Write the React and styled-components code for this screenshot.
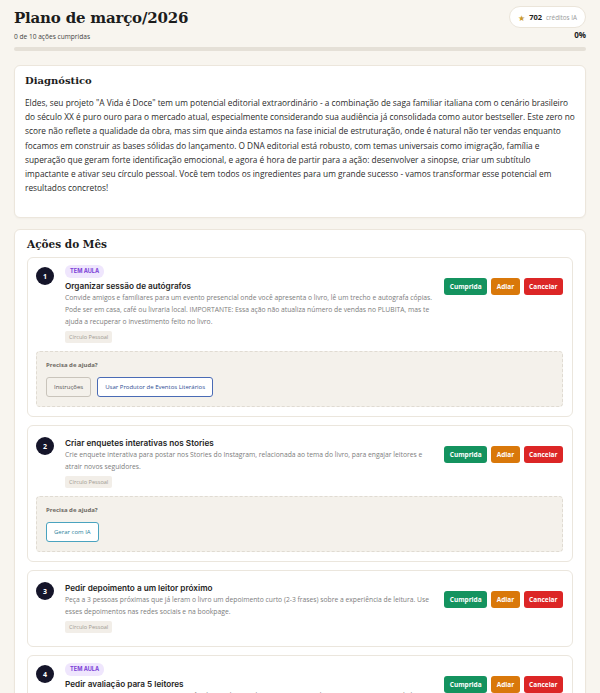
import React from "react";
import styled, { createGlobalStyle } from "styled-components";

const GlobalStyle = createGlobalStyle`
  body {
    margin: 0;
    background: #f8f5ef;
    font-family: "Open Sans", "Liberation Sans", sans-serif;
    color: #2a2a2a;
  }
`;

const Page = styled.div`
  padding: 6px 14px 0;
  width: 600px;
  box-sizing: border-box;
  height: 693px;
  overflow: hidden;
`;

const Header = styled.div`
  display: flex;
  justify-content: space-between;
  align-items: flex-start;
`;

const Title = styled.h1`
  margin: 3px 0 0;
  font-family: "DejaVu Serif", "Liberation Serif", serif;
  font-size: 15px;
  font-weight: 700;
  color: #1c1c1c;
  letter-spacing: -0.2px;
`;

const Sub = styled.div`
  margin-top: 5px;
  font-size: 6.6px;
  color: #444;
`;

const RightCol = styled.div`
  display: flex;
  flex-direction: column;
  align-items: flex-end;
`;

const Pill = styled.div`
  display: flex;
  align-items: center;
  gap: 4px;
  height: 22px;
  box-sizing: border-box;
  padding: 0 8px;
  background: #fff;
  border: 1px solid #ebe5da;
  border-radius: 999px;
  font-size: 6.3px;
  color: #999;

  b {
    font-size: 7.5px;
    color: #222;
  }
`;

const Star = styled.span`
  color: #c99a2e;
  font-size: 8px;
`;

const Percent = styled.div`
  margin-top: 1px;
  font-size: 8px;
  font-weight: 700;
  color: #222;
`;

const Bar = styled.div`
  margin-top: 6px;
  height: 4px;
  border-radius: 2px;
  background: #e5e0d7;
`;

const Card = styled.section`
  margin-top: ${(p) => p.$mt || 11}px;
  background: #fff;
  border: 1px solid #ece6dc;
  border-radius: 6px;
  box-shadow: 0 1px 2px rgba(0, 0, 0, 0.03);
  padding: ${(p) => p.$pad || "8px 10px 22px"};
`;

const CardTitle = styled.h2`
  margin: 0;
  font-family: "DejaVu Serif", "Liberation Serif", serif;
  font-size: ${(p) => p.$size || 10}px;
  line-height: 13px;
  font-weight: 700;
  color: #1c1c1c;
`;

const Diag = styled.p`
  margin: 9px 0 0;
  font-size: 8.32px;
  line-height: 14.2px;
  color: #2c2c2c;
`;

const List = styled.div`
  margin-top: 6px;
  display: flex;
  flex-direction: column;
  gap: 8px;
`;

const Action = styled.div`
  border: 1px solid #ebe6dd;
  border-radius: 6px;
  padding: 7px 9px 9px 8px;
`;

const Row = styled.div`
  display: flex;
  align-items: flex-start;
  padding-bottom: 4px;
`;

const Num = styled.div`
  flex: none;
  width: 18px;
  height: 18px;
  border-radius: 50%;
  background: #15152a;
  color: #fff;
  font-size: 7px;
  font-weight: 700;
  display: flex;
  align-items: center;
  justify-content: center;
  margin-top: ${(p) => (p.$badge ? 2 : 4)}px;
`;

const Body = styled.div`
  flex: 1;
  margin-left: 11px;
  min-width: 0;
  display: flex;
  flex-direction: column;
  align-items: flex-start;
`;

const Badge = styled.span`
  background: #efe6fd;
  color: #7b3fd6;
  font-family: "Inter", sans-serif;
  font-size: 5.6px;
  line-height: 7px;
  font-weight: 700;
  padding: 3px 5px;
  border-radius: 6px;
  margin-bottom: 3px;
`;

const ActTitle = styled.div`
  font-family: "Inter", sans-serif;
  font-size: 8.2px;
  font-weight: 600;
  color: #1e1e1e;
  line-height: 11px;
  margin-top: ${(p) => (p.$badge ? 0 : 5)}px;
`;

const Desc = styled.div`
  font-size: 6.75px;
  line-height: 12px;
  color: #7d7d7d;
  max-width: 368px;
`;

const Tag = styled.span`
  margin-top: 3px;
  background: #f2eee8;
  color: #a09a92;
  font-size: 5.6px;
  line-height: 6px;
  padding: 3px 4px;
  border-radius: 2px;
`;

const Buttons = styled.div`
  flex: none;
  display: flex;
  gap: 4px;
  margin-top: 13px;
`;

const ActBtn = styled.button`
  border: none;
  border-radius: 3px;
  height: 17px;
  padding: 0 5.5px;
  background: ${(p) => p.$bg};
  color: #fff;
  font-family: "Open Sans", sans-serif;
  font-size: 6.5px;
  font-weight: 700;
`;

const Help = styled.div`
  margin-top: 4px;
  background: #f4f1eb;
  border: 1px dashed #e0dbd2;
  border-radius: 4px;
  padding: 9px 9px 9px;
`;

const HelpLabel = styled.div`
  font-size: 6px;
  font-weight: 700;
  color: #6e6a64;
`;

const HelpRow = styled.div`
  display: flex;
  gap: 6px;
  margin-top: 8px;
`;

const HelpBtn = styled.button`
  height: 20px;
  padding: 0 7px;
  border-radius: 3px;
  font-family: "Open Sans", sans-serif;
  font-size: 6px;
  background: ${(p) => (p.$color ? "#fff" : "#f4f1eb")};
  border: 1px solid ${(p) => p.$color || "#c9c4bb"};
  color: ${(p) => p.$text || "#555"};
`;

const actions = [
  {
    n: 1,
    badge: true,
    title: "Organizar sessão de autógrafos",
    desc:
      "Convide amigos e familiares para um evento presencial onde você apresenta o livro, lê um trecho e autografa cópias. Pode ser em casa, café ou livraria local. IMPORTANTE: Essa ação não atualiza número de vendas no PLUBITA, mas te ajuda a recuperar o investimento feito no livro.",
    help: [
      { label: "Instruções" },
      { label: "Usar Produtor de Eventos Literários", color: "#4a6bb5", text: "#2d4d94" },
    ],
  },
  {
    n: 2,
    title: "Criar enquetes interativas nos Stories",
    desc:
      "Crie enquete interativa para postar nos Stories do Instagram, relacionada ao tema do livro, para engajar leitores e atrair novos seguidores.",
    help: [{ label: "Gerar com IA", color: "#4aa3bf", text: "#2b7f9c" }],
  },
  {
    n: 3,
    title: "Pedir depoimento a um leitor próximo",
    desc:
      "Peça a 3 pessoas próximas que já leram o livro um depoimento curto (2-3 frases) sobre a experiência de leitura. Use esses depoimentos nas redes sociais e na bookpage.",
  },
  {
    n: 4,
    badge: true,
    title: "Pedir avaliação para 5 leitores",
    desc:
      "Entre em contato com 5 pessoas que você sabe que leram o livro e peça uma avaliação na Amazon. Envie o link direto para facilitar.",
  },
];

const ActionCard = ({ a }) => (
  <Action>
    <Row>
      <Num $badge={a.badge}>{a.n}</Num>
      <Body>
        {a.badge && <Badge>TEM AULA</Badge>}
        <ActTitle $badge={a.badge}>{a.title}</ActTitle>
        <Desc>{a.desc}</Desc>
        <Tag>Círculo Pessoal</Tag>
      </Body>
      <Buttons>
        <ActBtn $bg="#14935f">Cumprida</ActBtn>
        <ActBtn $bg="#d9780a">Adiar</ActBtn>
        <ActBtn $bg="#dc2626">Cancelar</ActBtn>
      </Buttons>
    </Row>
    {a.help && (
      <Help>
        <HelpLabel>Precisa de ajuda?</HelpLabel>
        <HelpRow>
          {a.help.map((h) => (
            <HelpBtn key={h.label} $color={h.color} $text={h.text}>
              {h.label}
            </HelpBtn>
          ))}
        </HelpRow>
      </Help>
    )}
  </Action>
);

export default function App() {
  return (
    <Page>
      <GlobalStyle />
      <Header>
        <div>
          <Title>Plano de março/2026</Title>
          <Sub>0 de 10 ações cumpridas</Sub>
        </div>
        <RightCol>
          <Pill>
            <Star>★</Star>
            <b>702</b>
            <span>créditos IA</span>
          </Pill>
          <Percent>0%</Percent>
        </RightCol>
      </Header>
      <Bar />
      <Card $mt={14}>
        <CardTitle>Diagnóstico</CardTitle>
        <Diag>
          Eldes, seu projeto "A Vida é Doce" tem um potencial editorial extraordinário - a
          combinação de saga familiar italiana com o cenário brasileiro do século XX é puro ouro
          para o mercado atual, especialmente considerando sua audiência já consolidada como autor
          bestseller. Este zero no score não reflete a qualidade da obra, mas sim que ainda estamos
          na fase inicial de estruturação, onde é natural não ter vendas enquanto focamos em
          construir as bases sólidas do lançamento. O DNA editorial está robusto, com temas
          universais como imigração, família e superação que geram forte identificação emocional, e
          agora é hora de partir para a ação: desenvolver a sinopse, criar um subtítulo impactante e
          ativar seu círculo pessoal. Você tem todos os ingredientes para um grande sucesso - vamos
          transformar esse potencial em resultados concretos!
        </Diag>
      </Card>
      <Card $pad="8px 12px 10px">
        <CardTitle $size={10.5}>Ações do Mês</CardTitle>
        <List>
          {actions.map((a) => (
            <ActionCard key={a.n} a={a} />
          ))}
        </List>
      </Card>
    </Page>
  );
}
